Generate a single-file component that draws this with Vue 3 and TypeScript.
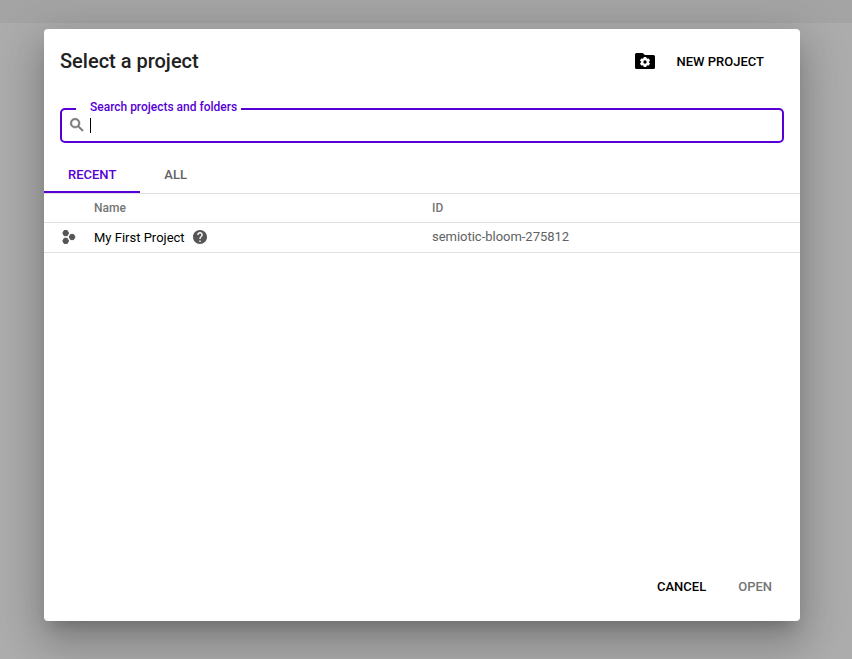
<script setup lang="ts">
import { ref } from 'vue'

interface Project {
  name: string
  id: string
}

const tabs: string[] = ['Recent', 'All']
const activeTab = ref<string>('Recent')
const projects: Project[] = [{ name: 'My First Project', id: 'semiotic-bloom-275812' }]
</script>

<template>
  <div class="page">
    <div class="topbar"></div>
    <section class="dialog" role="dialog">
      <header class="header">
        <h2 class="title">Select a project</h2>
        <button class="new-project">
          <svg class="folder" viewBox="0 0 20 16">
            <path d="M1.5 0H7.7L9.8 2H18.5Q20 2 20 3.5V14.500Q20 16 18.500 16H1.500Q0 16 0 14.500V1.500Q0 0 1.500 0Z" />
            <g transform="translate(10 9)" fill="#fff">
              <circle r="4" />
              <rect v-for="a in [0, 60, 120]" :key="a" x="-1.4" y="-5.1" width="2.8" height="10.2" rx=".5" :transform="`rotate(${a})`" />
            </g>
            <circle cx="10" cy="9" r="1.7" />
          </svg>
          <span>New project</span>
        </button>
      </header>

      <div class="field">
        <svg class="search-icon" viewBox="0 0 24 24">
          <path d="M15.5 14h-.79l-.28-.27A6.471 6.471 0 0 0 16 9.5 6.5 6.5 0 1 0 9.5 16c1.61 0 3.09-.59 4.23-1.57l.27.28v.79l5 4.99L20.49 19l-4.99-5zm-6 0C7.01 14 5 11.99 5 9.5S7.01 5 9.5 5 14 7.01 14 9.5 11.99 14 9.5 14z" />
        </svg>
        <span class="caret"></span>
        <label class="label">Search projects and folders</label>
      </div>

      <nav class="tabs">
        <button v-for="tab in tabs" :key="tab" class="tab" :class="{ active: tab === activeTab }" @click="activeTab = tab">
          {{ tab }}
        </button>
      </nav>

      <div class="row head">
        <span></span>
        <span>Name</span>
        <span>ID</span>
      </div>
      <div v-for="project in projects" :key="project.id" class="row item">
        <svg class="project-icon" viewBox="0 0 14 14">
          <path d="M2.2 .5H5.2L6.600 3.100 5.200 5.700H2.200L.8 3.100ZM2.200 8.300H5.200L6.600 10.900 5.200 13.500H2.200L.8 10.900ZM8.600 4.400H11.600L13 7 11.600 9.600H8.600L7.200 7Z" />
        </svg>
        <span class="name">
          {{ project.name }}
          <svg class="help" viewBox="2 2 20 20">
            <path d="M12 2C6.48 2 2 6.48 2 12s4.48 10 10 10 10-4.480 10-10S17.52 2 12 2zm1 17h-2v-2h2v2zm2.070-7.750l-.9.920C13.450 12.900 13 13.500 13 15h-2v-.5c0-1.100.450-2.100 1.170-2.830l1.240-1.260c.370-.360.590-.860.590-1.410 0-1.100-.9-2-2-2s-2 .9-2 2H8c0-2.210 1.790-4 4-4s4 1.790 4 4c0 .880-.360 1.680-.930 2.250z" />
          </svg>
        </span>
        <span class="id">{{ project.id }}</span>
      </div>

      <footer class="actions">
        <button class="cancel">Cancel</button>
        <button class="open" disabled>Open</button>
      </footer>
    </section>
  </div>
</template>

<style>
body {
  margin: 0;
}
</style>

<style scoped>
.page {
  box-sizing: border-box;
  height: 659px;
  background: #acacac;
  font-family: Roboto, sans-serif;
  overflow: hidden;
}
.topbar {
  height: 23px;
  background: #a4a4a4;
}
.dialog {
  position: relative;
  display: flex;
  flex-direction: column;
  width: 756px;
  height: 592px;
  margin: 6px 0 0 44px;
  border-radius: 4px;
  background: #fff;
  box-shadow: 0 11px 15px -7px rgba(0, 0, 0, 0.2), 0 24px 38px 3px rgba(0, 0, 0, 0.14), 0 9px 46px 8px rgba(0, 0, 0, 0.12);
}
button {
  padding: 0;
  border: 0;
  background: none;
  font: 500 13px/20px Roboto, sans-serif;
  text-transform: uppercase;
  color: #000;
}
.header {
  display: flex;
  justify-content: space-between;
  align-items: center;
  height: 64px;
  padding: 0 36px 0 16px;
}
.title {
  margin: 0;
  font-size: 20px;
  font-weight: 500;
  line-height: 32px;
  color: #212121;
}
.new-project {
  display: flex;
  align-items: center;
  gap: 22px;
}
.new-project span {
  padding-top: 2px;
}
.folder {
  width: 20px;
  height: 16px;
}
.field {
  position: relative;
  box-sizing: border-box;
  display: flex;
  align-items: center;
  height: 35px;
  margin: 15px 16px 0;
  padding-left: 6px;
  border: 2px solid #5600d6;
  border-radius: 5px;
}
.search-icon {
  width: 18px;
  height: 18px;
  margin-bottom: 1px;
  fill: #757575;
  stroke: #757575;
  stroke-width: 0.7;
}
.caret {
  width: 1px;
  height: 15px;
  margin-left: 4px;
  background: #000;
}
.label {
  position: absolute;
  top: -11px;
  left: 14px;
  padding: 0 4px 0 14px;
  background: #fff;
  font-size: 12px;
  font-weight: 500;
  line-height: 16px;
  letter-spacing: -0.01px;
  color: #5600d6;
  white-space: nowrap;
}
.tabs {
  display: flex;
  height: 36px;
  margin-top: 14px;
  border-bottom: 1px solid #e0e0e0;
}
.tab {
  padding: 2px 24px 0;
  border-bottom: 2px solid transparent;
  color: #616161;
}
.tab.active {
  border-color: #5600d6;
  color: #5600d6;
}
.row {
  display: grid;
  grid-template-columns: 50px 338px 1fr;
  align-items: center;
  border-bottom: 1px solid #e0e0e0;
}
.head {
  height: 28px;
  font-size: 12px;
  font-weight: 500;
  color: #757575;
}
.item {
  height: 29px;
  font-size: 13px;
}
.project-icon {
  width: 14px;
  height: 14px;
  margin: 0 0 1px 18px;
  fill: #565656;
  stroke: #565656;
  stroke-width: 1;
  stroke-linejoin: round;
}
.name {
  display: flex;
  align-items: center;
  gap: 8px;
  color: #000;
}
.help {
  width: 14px;
  height: 14px;
  margin-bottom: 1px;
  fill: #565656;
}
.id {
  padding-bottom: 2px;
  letter-spacing: -0.02px;
  color: #616161;
}
.actions {
  display: flex;
  justify-content: flex-end;
  gap: 32px;
  margin-top: auto;
  padding: 0 28px 24px 0;
}
.open {
  color: #757575;
}
</style>
